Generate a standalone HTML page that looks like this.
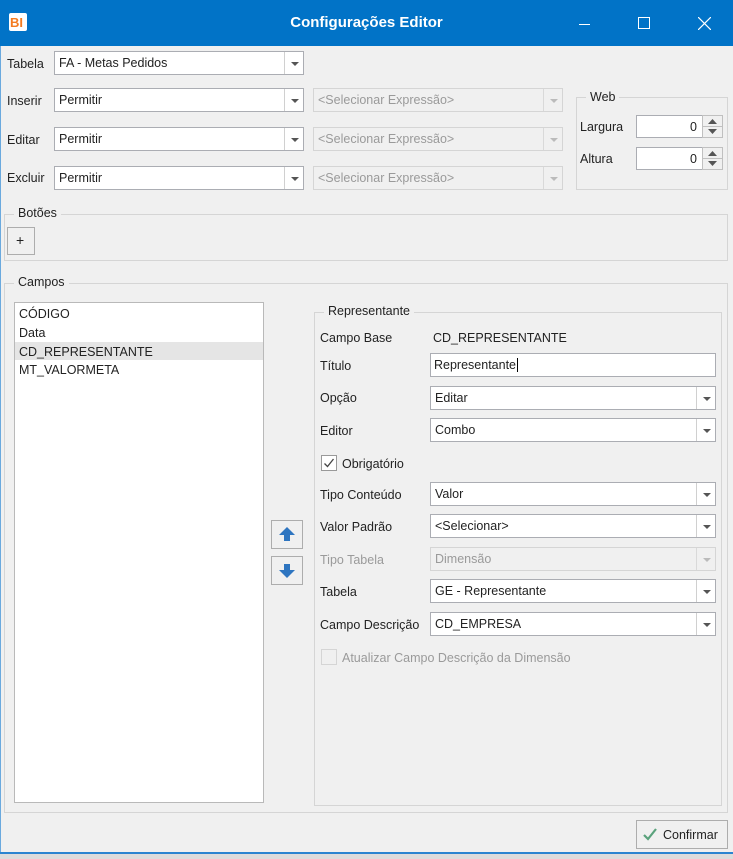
<!DOCTYPE html>
<html><head><meta charset="utf-8"><style>
*{box-sizing:border-box;margin:0;padding:0}
body{width:733px;height:859px;overflow:hidden;background:#f0f0f0;font-family:"Liberation Sans",sans-serif;font-size:12.5px;color:#222;position:relative}
.a{position:absolute}
.t{position:absolute;white-space:nowrap;line-height:14px}
.cb{position:absolute;background:#fff;border:1px solid #abadb3;height:24px}
.cb span{position:absolute;left:4px;top:4px;white-space:nowrap}
.cb i{position:absolute;right:0;top:0;bottom:0;width:19px;border-left:1px solid #d0d0d0;background:#fff}
.cb i:after{content:"";position:absolute;left:6px;top:10px;border-left:4px solid transparent;border-right:4px solid transparent;border-top:4px solid #555}
.dis{background:#f0f0f0;border-color:#d5d5d5;color:#9a9a9a}
.dis i{background:#f0f0f0;border-color:#d9d9d9}
.dis i:after{border-top-color:#bbb}
.gb{position:absolute;border:1px solid #d5d5d5}
.gl{position:absolute;background:#f0f0f0;padding:0 4px;line-height:14px}
</style></head><body>
<div class="a" style="left:0;top:0;width:733px;height:46px;background:#0173c7"></div>
<div class="a" style="left:9px;top:13px;width:18px;height:18px;background:#fff;border-radius:2px"></div>
<div class="t" style="left:10px;top:16px;color:#f47b20;font-weight:bold;font-size:13px">BI</div>
<div class="t" style="left:0;width:733px;text-align:center;top:16px;color:#fff;font-weight:bold;font-size:15px">Configurações Editor</div>
<div class="a" style="left:579px;top:24px;width:11px;height:1px;background:#fff"></div>
<div class="a" style="left:638px;top:17px;width:12px;height:12px;border:1px solid #fff"></div>
<svg class="a" style="left:698px;top:17px" width="13" height="13"><path d="M0 0L13 13M13 0L0 13" stroke="#fff" stroke-width="1.2"/></svg>
<div class="a" style="left:0;top:46px;width:1px;height:807px;background:#6aa9de"></div>
<div class="a" style="left:0;top:852px;width:733px;height:2px;background:#2b84d0"></div>
<div class="a" style="left:0;top:854px;width:733px;height:5px;background:#dcdcdc"></div>

<div class="t" style="left:7px;top:57px">Tabela</div>
<div class="cb" style="left:54px;top:51px;width:250px"><span>FA - Metas Pedidos</span><i></i></div>
<div class="t" style="left:7px;top:94px">Inserir</div>
<div class="cb" style="left:54px;top:88px;width:250px"><span>Permitir</span><i></i></div>
<div class="cb dis" style="left:313px;top:88px;width:250px"><span>&lt;Selecionar Expressão&gt;</span><i></i></div>
<div class="t" style="left:7px;top:133px">Editar</div>
<div class="cb" style="left:54px;top:127px;width:250px"><span>Permitir</span><i></i></div>
<div class="cb dis" style="left:313px;top:127px;width:250px"><span>&lt;Selecionar Expressão&gt;</span><i></i></div>
<div class="t" style="left:7px;top:171px">Excluir</div>
<div class="cb" style="left:54px;top:166px;width:250px"><span>Permitir</span><i></i></div>
<div class="cb dis" style="left:313px;top:166px;width:250px"><span>&lt;Selecionar Expressão&gt;</span><i></i></div>

<div class="gb" style="left:576px;top:97px;width:152px;height:93px"></div>
<div class="gl" style="left:586px;top:90px">Web</div>
<div class="t" style="left:580px;top:120px">Largura</div>
<div class="a" style="left:636px;top:115px;width:67px;height:23px;background:#fff;border:1px solid #abadb3"></div>
<div class="t" style="left:636px;width:61px;text-align:right;top:120px">0</div>
<div class="t" style="left:580px;top:152px">Altura</div>
<div class="a" style="left:636px;top:147px;width:67px;height:23px;background:#fff;border:1px solid #abadb3"></div>
<div class="t" style="left:636px;width:61px;text-align:right;top:152px">0</div>
<svg class="a" style="left:702px;top:115px" width="21" height="56"><g fill="#f0f0f0" stroke="#c0c0c0"><rect x=".5" y=".5" width="20" height="11"/><rect x=".5" y="11.5" width="20" height="11"/><rect x=".5" y="32.5" width="20" height="11"/><rect x=".5" y="43.5" width="20" height="11"/></g><g fill="#555"><path d="M6 9L10.5 4L15 9Z"/><path d="M6 14L10.5 19L15 14Z"/><path d="M6 41L10.5 36L15 41Z"/><path d="M6 46L10.5 51L15 46Z"/></g></svg>

<div class="gb" style="left:4px;top:214px;width:724px;height:47px"></div>
<div class="gl" style="left:14px;top:206px">Botões</div>
<div class="a" style="left:7px;top:227px;width:28px;height:28px;border:1px solid #adadad;background:#f0f0f0"></div>
<div class="t" style="left:16px;top:233px;font-size:14px">+</div>

<div class="gb" style="left:4px;top:283px;width:724px;height:530px"></div>
<div class="gl" style="left:14px;top:275px">Campos</div>
<div class="a" style="left:14px;top:302px;width:250px;height:501px;background:#fff;border:1px solid #b9b9b9"></div>
<div class="a" style="left:15px;top:342px;width:248px;height:18px;background:#e5e5e5"></div>
<div class="t" style="left:19px;top:307px">CÓDIGO</div>
<div class="t" style="left:19px;top:326px">Data</div>
<div class="t" style="left:19px;top:345px">CD_REPRESENTANTE</div>
<div class="t" style="left:19px;top:363px">MT_VALORMETA</div>

<svg class="a" style="left:271px;top:520px" width="32" height="65"><g fill="#f0f0f0" stroke="#adadad"><rect x=".5" y=".5" width="31" height="28"/><rect x=".5" y="36.5" width="31" height="28"/></g><g fill="#2e75c0"><path d="M8 15L16 7L24 15H19V21H13V15Z"/><path d="M8 50L16 58L24 50H19V44H13V50Z"/></g></svg>

<div class="gb" style="left:314px;top:312px;width:408px;height:494px"></div>
<div class="gl" style="left:324px;top:304px">Representante</div>
<div class="t" style="left:320px;top:331px">Campo Base</div>
<div class="t" style="left:433px;top:331px">CD_REPRESENTANTE</div>
<div class="t" style="left:320px;top:359px">Título</div>
<div class="a" style="left:430px;top:353px;width:286px;height:24px;background:#fff;border:1px solid #abadb3"></div>
<div class="t" style="left:434px;top:358px">Representante<span style="border-left:1px solid #000;margin-left:1px"></span></div>
<div class="t" style="left:320px;top:391px">Opção</div>
<div class="cb" style="left:430px;top:386px;width:286px"><span>Editar</span><i></i></div>
<div class="t" style="left:320px;top:424px">Editor</div>
<div class="cb" style="left:430px;top:418px;width:286px"><span>Combo</span><i></i></div>
<div class="a" style="left:321px;top:455px;width:16px;height:16px;border:1px solid #999;background:#fff"></div>
<svg class="a" style="left:321px;top:455px" width="16" height="16"><path d="M3.5 8.5L6.5 11.5L12.5 4" fill="none" stroke="#444" stroke-width="1.3"/></svg>
<div class="t" style="left:342px;top:457px">Obrigatório</div>
<div class="t" style="left:320px;top:488px">Tipo Conteúdo</div>
<div class="cb" style="left:430px;top:482px;width:286px"><span>Valor</span><i></i></div>
<div class="t" style="left:320px;top:520px">Valor Padrão</div>
<div class="cb" style="left:430px;top:514px;width:286px"><span>&lt;Selecionar&gt;</span><i></i></div>
<div class="t" style="left:320px;top:553px;color:#9a9a9a">Tipo Tabela</div>
<div class="cb dis" style="left:430px;top:547px;width:286px"><span>Dimensão</span><i></i></div>
<div class="t" style="left:320px;top:585px">Tabela</div>
<div class="cb" style="left:430px;top:579px;width:286px"><span>GE - Representante</span><i></i></div>
<div class="t" style="left:320px;top:618px">Campo Descrição</div>
<div class="cb" style="left:430px;top:612px;width:286px"><span>CD_EMPRESA</span><i></i></div>
<div class="a" style="left:321px;top:649px;width:16px;height:16px;border:1px solid #d5d5d5"></div>
<div class="t" style="left:342px;top:651px;color:#9a9a9a">Atualizar Campo Descrição da Dimensão</div>

<div class="a" style="left:636px;top:820px;width:92px;height:29px;border:1px solid #adadad;background:#f0f0f0"></div>
<svg class="a" style="left:642px;top:826px" width="16" height="16"><path d="M2 9L6 13L14 3" fill="none" stroke="#5aa27c" stroke-width="2.2"/></svg>
<div class="t" style="left:663px;top:828px">Confirmar</div>
</body></html>
